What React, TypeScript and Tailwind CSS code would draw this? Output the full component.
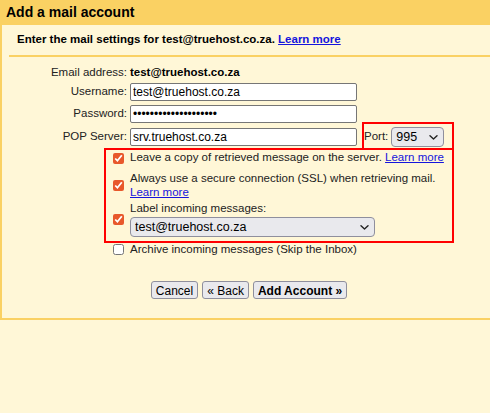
import React from "react";

const Check = ({ checked }: { checked?: boolean }) => (
  <input
    type="checkbox"
    defaultChecked={checked}
    className="m-0 h-[11px] w-[11px] shrink-0 accent-[#e8582b]"
  />
);

const Label = ({ children }: { children: React.ReactNode }) => (
  <div className="w-[125px] shrink-0 text-right">{children}</div>
);

const Link = ({ children }: { children: React.ReactNode }) => (
  <a href="#" className="text-[#1515dd] underline">
    {children}
  </a>
);

const Select = ({ value, width, options }: { value: string; width: string; options: string[] }) => (
  <div className={`relative ${width}`}>
    <select
      defaultValue={value}
      className="h-[20px] w-full appearance-none rounded-[4px] border border-[#8f8f9d] bg-[#e9e9ed] pl-[4px] text-[12.5px] text-black outline-none"
    >
      {options.map((o) => (
        <option key={o}>{o}</option>
      ))}
    </select>
    <svg
      className="pointer-events-none absolute right-[6px] top-[8px]"
      width="9"
      height="5"
      viewBox="0 0 9 5"
      fill="none"
    >
      <path d="M1 0.8 L4.5 4 L8 0.8" stroke="#222" strokeWidth="1.4" strokeLinecap="round" strokeLinejoin="round" />
    </svg>
  </div>
);

const field =
  "h-[18px] w-[227px] rounded-[2px] border border-[#767676] bg-white px-[2px] text-[12px] text-black outline-none";

const btn = "h-[18px] rounded-[3px] border border-[#8f8f9d] bg-[#e9e9ed] px-[4px] text-[12px] text-black";

export default function App() {
  return (
    <div className="h-[413px] w-[490px] overflow-hidden bg-[#fff7d7] font-['Liberation_Sans',Arial,sans-serif] text-[11.5px] text-[#222]">
      <div className="flex h-[25px] items-center bg-[#fad163] px-[6px] text-[14px] font-bold text-black">
        Add a mail account
      </div>

      <div className="relative h-[295px] border-b-2 border-l-2 border-[#fad163]">
        <div className="pl-[7px]">
          <div className="flex h-[30px] items-center pl-[8px] font-bold text-black">
            Enter the mail settings for test@truehost.co.za.&nbsp;<Link>Learn more</Link>
          </div>
          <div className="h-[2px] bg-[#fad163]" />
        </div>

        <div className="flex flex-col pt-[7px]">
          <div className="flex h-[18px] items-center gap-[3px]">
            <Label>Email address:</Label>
            <span className="font-bold text-black">test@truehost.co.za</span>
          </div>

          <div className="mt-[1px] flex h-[18px] items-center gap-[3px]">
            <Label>Username:</Label>
            <input defaultValue="test@truehost.co.za" className={field} />
          </div>

          <div className="mt-[4px] flex h-[18px] items-center gap-[3px]">
            <Label>Password:</Label>
            <input type="password" defaultValue="xxxxxxxxxxxxxxxxxxxx" className={field} />
          </div>

          <div className="mt-[5px] flex h-[18px] items-center gap-[3px]">
            <Label>POP Server:</Label>
            <input defaultValue="srv.truehost.co.za" className={field} />
            <span className="ml-[4px]">Port:</span>
            <Select value="995" width="w-[53px]" options={["995", "110"]} />
          </div>

          <div className="ml-[102px] mt-[2px] flex h-[95px] w-[350px] flex-col border-2 border-[#ff0000] pl-[7px]">
            <div className="flex h-[16px] items-center gap-[6px]">
              <Check checked />
              <span>
                Leave a copy of retrieved message on the server. <Link>Learn more</Link>
              </span>
            </div>
            <div className="mt-[5px] flex items-center gap-[6px]">
              <Check checked />
              <span className="leading-[14px]">
                Always use a secure connection (SSL) when retrieving mail.
                <br />
                <Link>Learn more</Link>
              </span>
            </div>
            <div className="mt-[2px] flex items-center gap-[6px]">
              <Check checked />
              <div className="flex flex-col">
                <span className="leading-[15px]">Label incoming messages:</span>
                <div className="mt-[1px]">
                  <Select value="test@truehost.co.za" width="w-[245px]" options={["test@truehost.co.za"]} />
                </div>
              </div>
            </div>
          </div>

          <div className="ml-[111px] flex h-[13px] items-center gap-[6px]">
            <Check />
            <span>Archive incoming messages (Skip the Inbox)</span>
          </div>

          <div className="mt-[25px] flex justify-center gap-[4px] pl-[6px]">
            <button className={btn}>Cancel</button>
            <button className={btn}>« Back</button>
            <button className={`${btn} font-bold`}>Add Account »</button>
          </div>
        </div>

        <div className="absolute left-[360px] top-[97px] h-[28px] w-[92px] border-2 border-b-0 border-[#ff0000]" />
      </div>
    </div>
  );
}
